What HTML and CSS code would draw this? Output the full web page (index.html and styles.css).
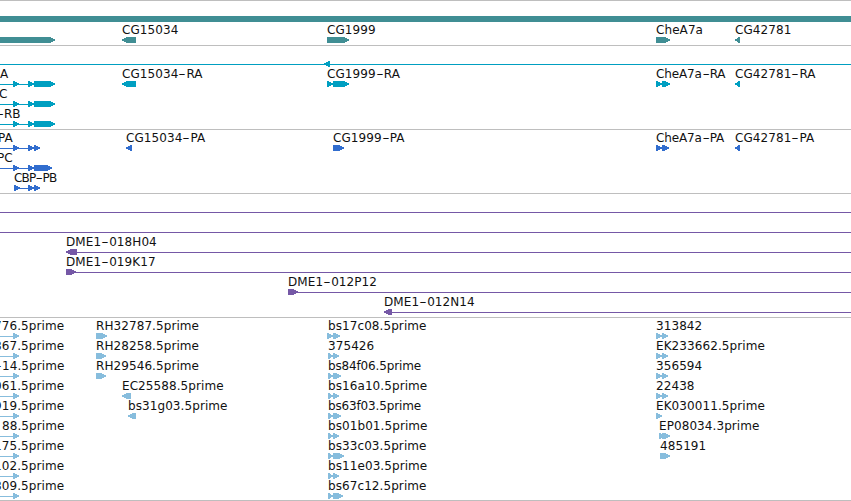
FILE: index.html
```
<!DOCTYPE html>
<html lang="en">
<head>
    <meta charset="UTF-8">
    <title>Genome Browser</title>
    <link rel="stylesheet" href="styles.css">
</head>

<body>
    <div class="browser" id="browser"></div>

    <script src="tracks.js"></script>
</body>
</html>
```
FILE: styles.css
```
body {
    margin: 0;
    background-color: #fff;
    color: #111;
    font-family: "DejaVu Sans", sans-serif;
    font-size: 12px;
    overflow: hidden;
}

.browser {
    width: 851px;
    border-bottom: 1px solid #bebebe;
    overflow: hidden;
}

.track {
    border-top: 1px solid #bebebe;
    padding: 1px 0 2px;
}

.track:last-child { padding-bottom: 1px; }

.row {
    position: relative;
    height: 20px;
    display: flex;
    align-items: flex-end;
}

.genes .row:first-child { margin-bottom: 1px; }

/* labels sit at their position on the sequence */
.label {
    position: absolute;
    top: 0;
    line-height: 14px;
    letter-spacing: 0.08px;
    white-space: nowrap;
}

.label.snug { letter-spacing: -0.15px; }
.label.tight { letter-spacing: -0.8px; }

/* wide hyphen */
.dash {
    display: inline-block;
    width: 8px;
    text-align: center;
    transform: scaleX(1.7);
}

.tight .dash { width: 7px; }

.glyphs {
    display: block;
    width: 851px;
    height: 6px;
    shape-rendering: crispEdges;
}

.genes .glyphs { fill: #408e94; }
.transcripts .glyphs { fill: #009fc1; }
.proteins .glyphs { fill: #316dce; }
.clones .glyphs { fill: #7558a6; }
.ests .glyphs { fill: #87bddd; }
```
FILE: tracks.js
```
const WIDTH = 851;

// feature: [label, label x, parts, spacing class]
// part: [start, end, direction]  ">" and "<" are arrows, "-" is a line, "=" is a bar
const estArrow = [[0, 13, "-"], [13, 19, ">"]];

const tracks = [
    { name: "genes", rows: [
        [["", 0, [[0, WIDTH, "="]]]],
        [
            ["", 0, [[-10, 55, ">"]]],
            ["CG15034", 122, [[122, 136, "<"]]],
            ["CG1999", 327, [[327, 349, ">"]]],
            ["CheA7a", 656, [[656, 670, ">"]]],
            ["CG42781", 735, [[735, 740, "<"]]]
        ]
    ]},
    { name: "transcripts", rows: [
        [["", 0, [[0, WIDTH, "-"], [324, 330, "<"]]]],
        [
            ["A", 0, [[0, 34, "-"], [13, 19, ">"], [28, 34, ">"], [34, 55, ">"]]],
            ["CG15034-RA", 122, [[122, 136, "<"]]],
            ["CG1999-RA", 327, [[327, 333, ">"], [333, 349, ">"]]],
            ["CheA7a-RA", 656, [[656, 662, ">"], [662, 670, ">"]], "snug"],
            ["CG42781-RA", 735, [[735, 740, "<"]]]
        ],
        [["C", -1, [[0, 34, "-"], [13, 19, ">"], [28, 34, ">"], [34, 55, ">"]]]],
        [["-RB", -4, [[0, 34, "-"], [13, 19, ">"], [28, 34, ">"], [34, 55, ">"]], "snug"]]
    ]},
    { name: "proteins", rows: [
        [
            ["PA", -2, [[0, 34, "-"], [13, 19, ">"], [28, 34, ">"], [34, 40, ">"]]],
            ["CG15034-PA", 126, [[126, 132, "<"]]],
            ["CG1999-PA", 333, [[333, 344, ">"]]],
            ["CheA7a-PA", 656, [[656, 662, ">"], [662, 669, ">"]], "snug"],
            ["CG42781-PA", 735, [[735, 740, "<"]]]
        ],
        [["PC", -3, [[0, 34, "-"], [13, 19, ">"], [28, 34, ">"], [34, 52, ">"]]]],
        [["CBP-PB", 14, [[14, 34, "-"], [14, 20, ">"], [28, 34, ">"], [34, 40, ">"]], "tight"]]
    ]},
    { name: "clones", rows: [
        [["", 0, [[0, WIDTH, "-"]]]],
        [["", 0, [[0, WIDTH, "-"]]]],
        [["DME1-018H04", 66, [[66, 77, "<"], [77, WIDTH, "-"]]]],
        [["DME1-019K17", 66, [[66, 76, ">"], [75, WIDTH, "-"]]]],
        [["DME1-012P12", 288, [[288, 298, ">"], [297, WIDTH, "-"]]]],
        [["DME1-012N14", 384, [[384, 392, "<"], [392, WIDTH, "-"]]]]
    ]},
    { name: "ests", rows: [
        [
            ["776.5prime", -6, estArrow],
            ["RH32787.5prime", 96, [[96, 107, ">"]]],
            ["bs17c08.5prime", 328, [[327, 333, ">"], [333, 340, ">"]]],
            ["313842", 656, [[656, 662, ">"], [662, 668, ">"]]]
        ],
        [
            ["867.5prime", -6, estArrow],
            ["RH28258.5prime", 96, [[96, 106, ">"]]],
            ["375426", 328, [[328, 333, ">"], [333, 339, ">"]]],
            ["EK233662.5prime", 656, [[656, 662, ">"], [662, 668, ">"]]]
        ],
        [
            ["-14.5prime", -6, estArrow],
            ["RH29546.5prime", 96, [[96, 106, ">"]]],
            ["bs84f06.5prime", 328, [[328, 333, ">"], [333, 341, ">"]], "snug"],
            ["356594", 656, [[656, 662, ">"], [662, 668, ">"]]]
        ],
        [
            ["061.5prime", -6, estArrow],
            ["EC25588.5prime", 122, [[122, 131, "<"]]],
            ["bs16a10.5prime", 328, [[328, 333, ">"], [333, 339, ">"]]],
            ["22438", 656, [[656, 662, ">"], [662, 668, ">"]]]
        ],
        [
            ["919.5prime", -6, estArrow],
            ["bs31g03.5prime", 128, [[128, 136, "<"]]],
            ["bs63f03.5prime", 328, [[328, 333, ">"], [333, 341, ">"]], "snug"],
            ["EK030011.5prime", 656, [[656, 662, ">"]]]
        ],
        [
            ["88.5prime", 2, estArrow],
            ["bs01b01.5prime", 328, [[328, 333, ">"], [333, 339, ">"]]],
            ["EP08034.3prime", 659, [[659, 665, ">"], [662, 670, ">"]]]
        ],
        [
            ["175.5prime", -6, estArrow],
            ["bs33c03.5prime", 328, [[328, 333, ">"], [333, 344, ">"]]],
            ["485191", 660, [[660, 670, ">"]]]
        ],
        [
            ["102.5prime", -6, estArrow],
            ["bs11e03.5prime", 328, [[328, 333, ">"], [333, 339, ">"]]]
        ],
        [
            ["809.5prime", -6, estArrow],
            ["bs67c12.5prime", 328, [[328, 333, ">"], [333, 343, ">"]]]
        ]
    ]}
];

function drawPart([start, end, type]) {
    const head = Math.min(6, end - start);
    if (type === "-") {
        return `<rect x="${start}" y="3" width="${end - start}" height="1"/>`;
    }
    if (type === ">") {
        const neck = end - head;
        return `<polygon points="${start},0 ${neck + 1},0 ${end},2.5 ${end},3.5 ${neck + 1},6 ${start},6"/>`;
    }
    if (type === "<") {
        const neck = start + head;
        return `<polygon points="${end},0 ${neck - 1},0 ${start},2.5 ${start},3.5 ${neck - 1},6 ${end},6"/>`;
    }
    return `<rect x="${start}" y="0" width="${end - start}" height="6"/>`;
}

function drawRow(features) {
    let labels = "";
    let shapes = "";
    for (const [label, x, parts, spacing = ""] of features) {
        if (label) {
            const text = label.replace("-", '<span class="dash">-</span>');
            labels += `<span class="label ${spacing}" style="left: ${x}px">${text}</span>`;
        }
        shapes += parts.map(drawPart).join("");
    }
    return `<div class="row">${labels}<svg class="glyphs" viewBox="0 0 ${WIDTH} 6">${shapes}</svg></div>`;
}

document.getElementById("browser").innerHTML = tracks.map(track =>
    `<div class="track ${track.name}">${track.rows.map(drawRow).join("")}</div>`
).join("");
```
